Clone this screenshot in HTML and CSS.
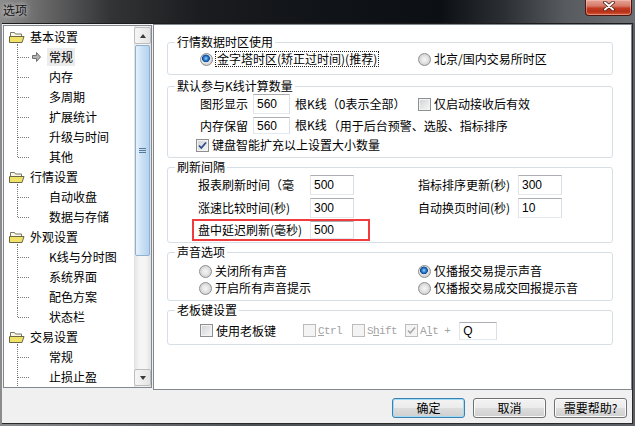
FILE: index.html
```html
<!DOCTYPE html>
<html lang="zh-CN">
<head>
<meta charset="UTF-8">
<title>选项</title>
<link rel="stylesheet" href="styles.css">
</head>
<body>
<div class="window">
  <div class="titlebar">
    <span class="title">选项</span>
    <div class="close">
      <svg width="12" height="10" viewBox="0 0 12 10">
        <path d="M2 1.5 L10 8.5 M10 1.5 L2 8.5" stroke="#4a1a10" stroke-width="3.6" stroke-linecap="round"/>
        <path d="M2 1.5 L10 8.5 M10 1.5 L2 8.5" stroke="#fff" stroke-width="2" stroke-linecap="round"/>
      </svg>
    </div>
  </div>
  <div class="client">
    <div class="main">
      <div class="tree">
        <div class="tree-list">
          <div class="node"><svg class="folder" width="16" height="13" viewBox="0 0 16 13"><path d="M1.5 1.5 h4 l1 1.5 h6 v8.5 h-11 z" fill="#fbf8e4" stroke="#77776a"/><path d="M0.5 5.5 h14.5 l-2 6 h-12.5 z" fill="#efe266" stroke="#6b6848"/></svg>基本设置</div>
          <div class="leaf cur"><svg class="arrow" width="9" height="10" viewBox="0 0 9 10"><path d="M0.5 3.5 h4 v-3 l4 4.5 l-4 4.5 v-3 h-4 z" fill="#b4b4b4" stroke="#707070"/></svg><span class="sel">常规</span></div>
          <div class="leaf">内存</div>
          <div class="leaf">多周期</div>
          <div class="leaf">扩展统计</div>
          <div class="leaf">升级与时间</div>
          <div class="leaf last">其他</div>
          <div class="node"><svg class="folder" width="16" height="13" viewBox="0 0 16 13"><path d="M1.5 1.5 h4 l1 1.5 h6 v8.5 h-11 z" fill="#fbf8e4" stroke="#77776a"/><path d="M0.5 5.5 h14.5 l-2 6 h-12.5 z" fill="#efe266" stroke="#6b6848"/></svg>行情设置</div>
          <div class="leaf">自动收盘</div>
          <div class="leaf last">数据与存储</div>
          <div class="node"><svg class="folder" width="16" height="13" viewBox="0 0 16 13"><path d="M1.5 1.5 h4 l1 1.5 h6 v8.5 h-11 z" fill="#fbf8e4" stroke="#77776a"/><path d="M0.5 5.5 h14.5 l-2 6 h-12.5 z" fill="#efe266" stroke="#6b6848"/></svg>外观设置</div>
          <div class="leaf">K线与分时图</div>
          <div class="leaf">系统界面</div>
          <div class="leaf">配色方案</div>
          <div class="leaf last">状态栏</div>
          <div class="node"><svg class="folder" width="16" height="13" viewBox="0 0 16 13"><path d="M1.5 1.5 h4 l1 1.5 h6 v8.5 h-11 z" fill="#fbf8e4" stroke="#77776a"/><path d="M0.5 5.5 h14.5 l-2 6 h-12.5 z" fill="#efe266" stroke="#6b6848"/></svg>交易设置</div>
          <div class="leaf">常规</div>
          <div class="leaf">止损止盈</div>
        </div>
        <div class="vscroll">
          <div class="sb-btn"><span class="tri-up"></span></div>
          <div class="thumb"><span class="grip"></span></div>
          <div class="sb-btn"><span class="tri-down"></span></div>
        </div>
      </div>

      <div class="panel">
        <fieldset class="group g1">
          <legend>行情数据时区使用</legend>
          <div class="row h16">
            <div class="col-l"><span class="radio on"></span><span class="opt focus">金字塔时区(矫正过时间)(推荐)</span></div>
            <div class="col-r"><span class="radio"></span><span class="opt">北京/国内交易所时区</span></div>
          </div>
        </fieldset>

        <fieldset class="group g2">
          <legend>默认参与K线计算数量</legend>
          <div class="row h20">
            <div class="col-l">
              <span class="lbl w53">图形显示</span><input class="edit w37" value="560"><span class="unit">根K线（0表示全部）</span>
            </div>
            <div class="col-r"><span class="check"></span><span class="opt">仅启动接收后有效</span></div>
          </div>
          <div class="row h17 gap3 pl25">
            <span class="lbl w53">内存保留</span><input class="edit w37 h17" value="560"><span class="unit top">根K线</span><span class="note">（用于后台预警、选股、指标排序</span>
          </div>
          <div class="row h18 gap2 pl21">
            <span class="check"><svg width="11" height="11" viewBox="0 0 11 11"><path d="M2 5.5 L4.3 8 L9 2.5" fill="none" stroke="#2c4a8a" stroke-width="1.8"/></svg></span><span class="opt">键盘智能扩充以上设置大小数量</span>
          </div>
        </fieldset>

        <fieldset class="group g3">
          <legend>刷新间隔</legend>
          <div class="row h20">
            <div class="col-l pl23"><span class="lbl w112">报表刷新时间（毫</span><input class="edit w44" value="500"></div>
            <div class="col-r"><span class="lbl w100">指标排序更新(秒)</span><input class="edit w44" value="300"></div>
          </div>
          <div class="row h20 gap3">
            <div class="col-l pl23"><span class="lbl w112">涨速比较时间(秒)</span><input class="edit w44" value="300"></div>
            <div class="col-r"><span class="lbl w100">自动换页时间(秒)</span><input class="edit w44" value="10"></div>
          </div>
          <div class="row gap1">
            <div class="hl"><span class="lbl w112">盘中延迟刷新(毫秒)</span><input class="edit w44 h18" value="500"></div>
          </div>
        </fieldset>

        <fieldset class="group g4">
          <legend>声音选项</legend>
          <div class="row h16">
            <div class="col-l pl24"><span class="radio"></span><span class="opt">关闭所有声音</span></div>
            <div class="col-r"><span class="radio on"></span><span class="opt">仅播报交易提示声音</span></div>
          </div>
          <div class="row h16 gap1">
            <div class="col-l pl24"><span class="radio"></span><span class="opt">开启所有声音提示</span></div>
            <div class="col-r"><span class="radio"></span><span class="opt">仅播报交易成交回报提示音</span></div>
          </div>
        </fieldset>

        <fieldset class="group g5">
          <legend>老板键设置</legend>
          <div class="row h19 pl25">
            <span class="check"></span><span class="opt">使用老板键</span>
            <span class="check dis ml27"></span><span class="mono"><u>C</u>trl</span>
            <span class="check dis ml10"></span><span class="mono">S<u>h</u>ift</span>
            <span class="check dis ml8"><svg width="11" height="11" viewBox="0 0 11 11"><path d="M2 5.5 L4.3 8 L9 2.5" fill="none" stroke="#a8a8a8" stroke-width="1.6"/></svg></span><span class="mono">A<u>l</u>t +</span>
            <input class="edit key" value="Q">
          </div>
        </fieldset>
      </div>
    </div>

    <div class="buttons">
      <button class="btn default">确定</button>
      <button class="btn">取消</button>
      <button class="btn">需要帮助?</button>
    </div>
  </div>
</div>
</body>
</html>
```

FILE: styles.css
```css
* {
    box-sizing: border-box;
}
html, body {
    margin: 0;
    padding: 0;
}
body {
    width: 635px;
    height: 426px;
    overflow: hidden;
    font-family: "Noto Sans CJK SC", sans-serif;
    font-size: 12px;
    line-height: 14px;
    color: #000;
    background: #5f6367;
}
.window {
    width: 635px;
    height: 426px;
    display: flex;
    flex-direction: column;
    background: linear-gradient(90deg, #8a8c8e 0, #4e5154 40%, #5c6064 100%);
}
.titlebar {
    height: 23px;
    flex: none;
    display: flex;
    justify-content: space-between;
    align-items: flex-start;
    background: linear-gradient(90deg, #8d8d8d 0, #6a6a6a 40px, #333436 110px, #1a1c1f 200px, #101317 330px, #0c0f13 440px, #2c2f33 505px, #575b5f 565px, #6b6f73 635px);
}
.title {
    padding: 3px 0 0 3px;
    color: #141414;
    text-shadow: 0 0 4px rgba(255, 255, 255, 0.7), 0 0 9px rgba(255, 255, 255, 0.4);
}
.close {
    width: 47px;
    height: 16px;
    margin-right: 3px;
    padding-top: 1px;
    display: flex;
    justify-content: center;
    align-items: flex-start;
    border: 1px solid #4b1811;
    border-top: none;
    border-radius: 0 0 4px 4px;
    background: linear-gradient(#e6a497 0, #d67a68 40%, #c23a20 55%, #b63119 78%, #d85c3c 100%);
    box-shadow: inset 0 0 0 1px rgba(255, 205, 195, 0.45);
}
.client {
    flex: 1;
    margin: 0 2px 2px 2px;
    background: #f0f0f0;
    border-top: 1px solid #1c1c1c;
    border-right: 1px solid #2a2a2a;
    border-bottom: 1px solid #2a2a2a;
    display: flex;
    flex-direction: column;
}
.main {
    height: 366px;
    flex: none;
    display: flex;
    gap: 1px;
    padding-left: 1px;
}

/* tree */
.tree {
    width: 149px;
    height: 363px;
    margin-top: 1px;
    border: 1px solid #828790;
    background: #fff;
    display: flex;
    overflow: hidden;
}
.tree-list {
    flex: 1;
    padding-top: 1px;
    white-space: nowrap;
}
.node {
    height: 20px;
    padding-left: 5px;
    display: flex;
    align-items: center;
}
.folder {
    margin-right: 5px;
    flex: none;
}
.leaf {
    position: relative;
    height: 20px;
    padding-left: 45px;
    display: flex;
    align-items: center;
}
.leaf::before {
    content: "";
    position: absolute;
    left: 13px;
    top: 0;
    bottom: -1px;
    border-left: 1px dotted #7a7a7a;
}
.node + .leaf::before {
    top: -3px;
}
.leaf.last::before {
    bottom: 10px;
}
.leaf::after {
    content: "";
    position: absolute;
    left: 14px;
    top: 10px;
    width: 11px;
    border-top: 1px dotted #7a7a7a;
}
.leaf.cur {
    padding-left: 28px;
}
.arrow {
    margin-right: 6px;
    flex: none;
}
.sel {
    background: #ececec;
    padding: 0 2px;
    line-height: 18px;
}
.vscroll {
    width: 17px;
    flex: none;
    display: flex;
    flex-direction: column;
    padding: 1px 0;
    background: linear-gradient(90deg, #e2e2e2, #f5f5f5 30%, #f5f5f5 70%, #e2e2e2);
}
.sb-btn {
    height: 17px;
    flex: none;
    border: 1px solid #bdbdbd;
    border-radius: 2px;
    background: linear-gradient(90deg, #f6f6f6, #e4e4e4);
    display: flex;
    justify-content: center;
    align-items: center;
}
.sb-btn:last-child {
    margin-top: auto;
}
.tri-up {
    border-left: 3.5px solid transparent;
    border-right: 3.5px solid transparent;
    border-bottom: 4px solid #3a3a3a;
}
.tri-down {
    border-left: 3.5px solid transparent;
    border-right: 3.5px solid transparent;
    border-top: 4px solid #3a3a3a;
}
.thumb {
    height: 211px;
    margin: 1px 1px 0 1px;
    border: 1px solid #8fb0cf;
    border-radius: 2px;
    background: linear-gradient(90deg, #e6f1fb, #c9e0f4 50%, #b4d2ee);
    display: flex;
    justify-content: center;
    align-items: center;
}
.grip {
    width: 7px;
    height: 5px;
    background: linear-gradient(#55799e 0 1px, transparent 1px 2px, #55799e 2px 3px, transparent 3px 4px, #55799e 4px 5px);
}

/* right panel */
.panel {
    flex: 1;
    height: 366px;
    border: 1px solid #828790;
    background: #fff;
    padding: 10px 0 0 13px;
}
.group {
    width: 446px;
    margin: 0;
    min-width: 0;
    border: 1px solid #d5dfe5;
    border-radius: 3px;
    padding: 0 8px 0 7px;
}
.group legend {
    padding: 0 2px;
    line-height: 14px;
    height: 14px;
}
.g1 { padding-top: 2px; padding-bottom: 7px; }
.g2 { margin-top: 4px; padding-top: 1px; padding-bottom: 3px; }
.g3 { margin-top: 2px; padding-top: 1px; padding-bottom: 1px; }
.g4 { margin-top: 2px; padding-top: 4px; padding-bottom: 4px; }
.g5 { margin-top: 2px; padding-top: 4px; padding-bottom: 4px; }

.row {
    display: flex;
    align-items: center;
    white-space: nowrap;
}
.h16 { height: 16px; }
.h17 { height: 17px; }
.h18 { height: 18px; }
.h19 { height: 19px; }
.h20 { height: 20px; }
.gap1 { margin-top: 1px; }
.gap2 { margin-top: 2px; }
.gap3 { margin-top: 3px; }
.pl21 { padding-left: 21px; }
.pl25 { padding-left: 25px; }
.col-l {
    width: 243px;
    flex: none;
    padding-left: 25px;
    display: flex;
    align-items: center;
}
.col-l.pl23 { padding-left: 23px; }
.col-l.pl24 { padding-left: 24px; }
.col-r {
    display: flex;
    align-items: center;
}
.lbl {
    flex: none;
}
.w53 { width: 53px; }
.w100 { width: 100px; }
.w112 { width: 112px; }
.opt {
    margin-left: 3px;
}
.focus {
    outline: 1px dotted #222;
    padding: 0 1px;
}
.unit {
    margin-left: 5px;
}
.unit.top {
    align-self: flex-start;
    padding-top: 1px;
}
.note {
    margin-left: 1px;
}
.edit {
    height: 20px;
    padding: 0 0 0 3px;
    margin: 0;
    border: 1px solid;
    border-color: #abadb3 #dbdfe6 #e3e9ef #e2e3ea;
    font-family: "Liberation Sans", sans-serif;
    font-size: 12px;
    color: #000;
    background: #fff;
    outline: none;
    flex: none;
}
.w37 { width: 37px; }
.w44 { width: 44px; }
.edit.h17 { height: 17px; }
.edit.h18 { height: 18px; }
.edit.key {
    width: 38px;
    height: 18px;
    margin-left: 9px;
}
.hl {
    width: 178px;
    height: 22px;
    margin-left: 17px;
    padding-left: 4px;
    border: 2px solid #f03c3c;
    display: flex;
    align-items: center;
}
.radio {
    width: 13px;
    height: 13px;
    flex: none;
    border-radius: 50%;
    border: 1px solid #8e8f8f;
    background: radial-gradient(circle at 50% 50%, #f6f6f6 0, #e6e6e6 3px, #cfcfcf 6px);
}
.radio.on {
    background: radial-gradient(circle at 45% 40%, #9fd3fb 0, #2f7fd0 2px, #0d4a8e 3.6px, #e9e9e9 4.2px, #d2d2d2 6px);
}
.check {
    width: 13px;
    height: 13px;
    flex: none;
    border: 1px solid #8e8f8f;
    background: linear-gradient(135deg, #cfd2d6, #f7f7f7);
    box-shadow: inset 0 0 0 1px #f3f3f3;
    display: flex;
    justify-content: center;
    align-items: center;
}
.check.dis {
    border-color: #bcbcbc;
    background: #f4f4f4;
    box-shadow: none;
}
.ml8 { margin-left: 8px; }
.ml10 { margin-left: 10px; }
.ml27 { margin-left: 27px; }
.mono {
    margin-left: 2px;
    font-family: "Liberation Mono", monospace;
    font-size: 11px;
    letter-spacing: -0.6px;
    color: #a3a3a3;
}

/* bottom buttons */
.buttons {
    flex: 1;
    display: flex;
    justify-content: flex-end;
    align-items: flex-start;
    gap: 8px;
    padding: 8px 5px 0 0;
}
.btn {
    width: 73px;
    height: 20px;
    padding: 0;
    border: 1px solid #707070;
    border-radius: 3px;
    background: linear-gradient(#f3f3f3 0, #ebebeb 50%, #dddddd 50%, #cfcfcf 100%);
    box-shadow: inset 0 0 0 1px #fbfbfb;
    font-family: "Noto Sans CJK SC", sans-serif;
    font-size: 12px;
    line-height: 16px;
    color: #000;
}
.btn.default {
    border-color: #3c7fb1;
    box-shadow: inset 0 0 0 1px #9fdcf7;
}
```
